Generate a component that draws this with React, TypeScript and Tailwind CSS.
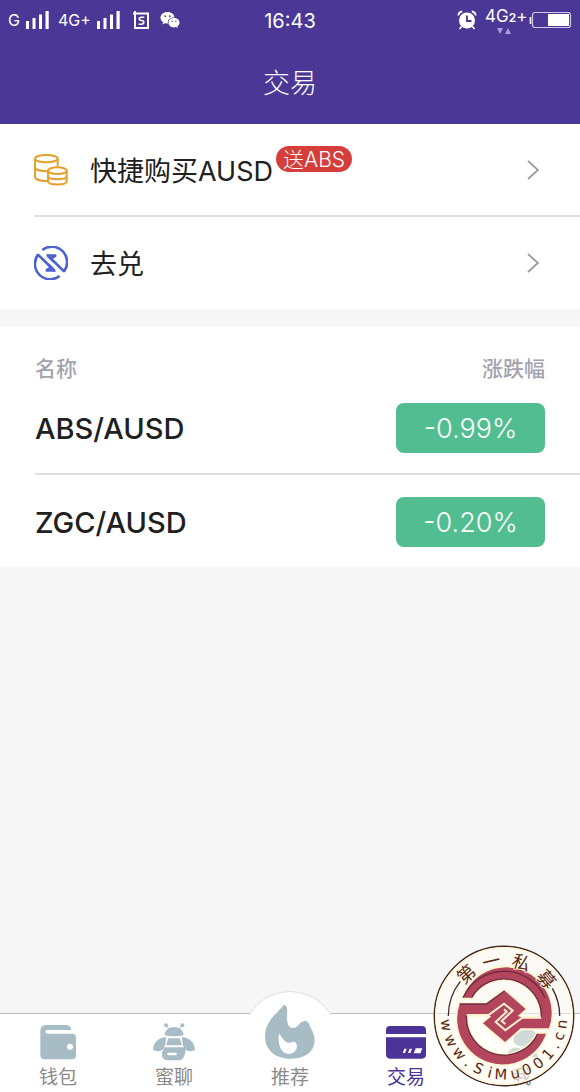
import type { ReactNode } from "react";

function SignalBars() {
  return (
    <svg className="h-[18px] w-6" viewBox="0 0 24 18" fill="currentColor" aria-hidden="true">
      <rect x="0" y="10" width="3" height="8" />
      <rect x="6.5" y="7" width="3" height="11" />
      <rect x="13" y="3.5" width="3" height="14.5" />
      <rect x="19.5" y="0" width="3.2" height="18" />
    </svg>
  );
}

function StatusBar() {
  return (
    <div className="relative flex h-10 items-center justify-between pl-2 pr-2 text-white">
      <div className="flex items-center">
        <span className="w-[18px] text-base">G</span>
        <SignalBars />
        <span className="ml-2 w-9 text-base">4G+</span>
        <span className="ml-[3px] flex">
          <SignalBars />
        </span>
        <svg className="ml-3 h-[18px] w-[17px]" viewBox="0 0 17 18" fill="none" stroke="currentColor" strokeWidth="2" aria-hidden="true">
          <path d="M0 2.500H15V17H2V0" />
          <path d="M11.300 6.200H8.500C5.500 6.200 5.500 9.500 8.500 9.500S11.500 13.200 8.500 13.200H5.700" strokeWidth="1.600" />
        </svg>
        <svg className="ml-2.5 h-[18px] w-5" viewBox="0 0 20 18" aria-hidden="true">
          <path d="M7.500 1C3.500 1 .5 3.500.5 6.700c0 1.900 1 3.400 2.600 4.500l-.7 2.300 2.500-1.300c.8.2 1.700.3 2.600.3 4 0 7-2.600 7-5.800S11.500 1 7.500 1Z" fill="#fff" />
          <ellipse cx="14" cy="11.800" rx="6.300" ry="5.600" fill="#4b3796" />
          <path d="M14 7c-3.200 0-5.500 2.100-5.500 4.700s2.300 4.700 5.500 4.700c.7 0 1.300-.1 1.900-.3l2 1-.5-1.800c1.300-.9 2.100-2.100 2.100-3.600C19.500 9.100 17.200 7 14 7Z" fill="#fff" />
          <g fill="#4b3796">
            <circle cx="5.200" cy="5.200" r=".9" />
            <circle cx="9.800" cy="5.200" r=".9" />
            <circle cx="12.200" cy="10.200" r=".7" />
            <circle cx="15.900" cy="10.200" r=".7" />
          </g>
        </svg>
      </div>
      <time className="absolute left-1/2 -translate-x-1/2 pt-0.5 text-xl">16:43</time>
      <div className="flex items-center">
        <svg className="h-5 w-5" viewBox="0 0 20 20" aria-hidden="true">
          <circle cx="10" cy="10.500" r="8" fill="#fff" />
          <path d="M1.200 5.500A5 5 0 0 1 5.200 1.300M18.800 5.500A5 5 0 0 0 14.800 1.300M4.500 16.500l-2 2.500M15.500 16.500l2 2.500" fill="none" stroke="#fff" strokeWidth="1.700" />
          <path d="M10 5.500V11h4.500" fill="none" stroke="#4b3796" strokeWidth="1.800" />
        </svg>
        <div className="ml-2 flex w-10 flex-col items-start">
          <span className="flex items-baseline text-[17px] leading-5">
            4G<small className="text-xs font-semibold leading-5">2</small>+
          </span>
          <svg className="ml-3 h-[6px] w-[14px]" viewBox="0 0 14 6" fill="#a99bdc" aria-hidden="true">
            <path d="M0 0H6L3 6ZM8 6h6L11 0Z" />
          </svg>
        </div>
        <svg className="ml-1 h-[18px] w-[43px]" viewBox="0 0 43 18" aria-hidden="true">
          <path d="M1.500 6v7" stroke="#fff" strokeWidth="1.600" />
          <rect x="3.500" y="1.500" width="38" height="15" rx="2.500" fill="none" stroke="#cfc6e8" strokeWidth="1.200" />
          <rect x="19" y="3" width="21" height="12" fill="#fff" />
        </svg>
      </div>
    </div>
  );
}

function CoinsIcon() {
  return (
    <svg className="h-[34px] w-[34px]" viewBox="0 0 102 102" fill="none" stroke="#e5a02c" strokeWidth="6" aria-hidden="true">
      <ellipse cx="37" cy="17" rx="34" ry="11" />
      <path d="M3 17V71C3 78 16 84 41 84M71 17V40M3 43C3 50 19 56 43 54" />
      <ellipse cx="70" cy="53" rx="28" ry="10" />
      <path d="M42 53V85C42 98 98 98 98 85V53M42 69C42 82 98 82 98 69" />
    </svg>
  );
}

function ExchangeIcon() {
  return (
    <svg className="h-[34px] w-[34px]" viewBox="0 0 102 102" fill="none" stroke="#4d62cf" strokeWidth="8" aria-hidden="true">
      <path d="M25 12A46 46 0 0 1 90 76L40 27" strokeLinejoin="bevel" />
      <path d="M77 90A46 46 0 0 1 12 26L62 75" strokeLinejoin="bevel" />
      <path d="M36 25H67V32L57 38V50L41 34ZM66 77H35V70L45 64V52L61 68Z" fill="#4d62cf" stroke="none" />
    </svg>
  );
}

function Chevron() {
  return (
    <svg className="h-5 w-3" viewBox="0 0 12 20" fill="none" stroke="#999" strokeWidth="1.700" aria-hidden="true">
      <path d="M1 1L11 10L1 19" />
    </svg>
  );
}

function ActionRow({ icon, label, badge }: { icon: ReactNode; label: string; badge?: string }) {
  return (
    <a href="#" className="flex h-[92px] items-center pr-[41px]">
      {icon}
      <span className="relative ml-[22px] pt-1 text-[27px] leading-9">
        {label}
        {badge && (
          <span className="absolute -top-1 left-full ml-[3px] flex h-[26px] items-center whitespace-nowrap rounded-full bg-[#d53e3b] px-[7px] pt-0.5 text-[21px] font-light text-white">
            {badge}
          </span>
        )}
      </span>
      <span className="ml-auto">
        <Chevron />
      </span>
    </a>
  );
}

const pairs = [
  { name: "ABS/AUSD", change: "-0.99%" },
  { name: "ZGC/AUSD", change: "-0.20%" },
];

function WalletIcon() {
  return (
    <svg className="h-[35px] w-9" viewBox="0 0 108 105" aria-hidden="true">
      <path d="M18 0H78Q92 0 94 15H22Q16 15 16 20T22 26H96Q108 26 108 38V92Q108 103 96 103H14Q1 103 1 90V18Q1 0 18 0Z" fill="#a8bcc6" />
      <circle cx="90" cy="65" r="9" fill="#fff" />
    </svg>
  );
}

function BeeIcon() {
  return (
    <svg className="h-[38px] w-[42px]" viewBox="0 0 126 114" fill="#a8bcc6" aria-hidden="true">
      <circle cx="39" cy="7" r="6" />
      <circle cx="88" cy="7" r="6" />
      <path d="M42 12L48 18M84 12L78 18" stroke="#a8bcc6" strokeWidth="3" />
      <path d="M34 37C38 4 88 4 92 37Q63 43 34 37Z" />
      <path d="M46 46H80L87 67H39Z" />
      <path d="M40 43C20 41 0 59 0 80C16 89 32 84 36 68ZM86 43C106 41 126 59 126 80C110 89 94 84 90 68Z" />
      <path d="M35 73H91Q101 78 96 92Q90 112 78 112H43Q25 112 27 88Z" />
      <rect x="43" y="89" width="28" height="8" rx="3" fill="#fff" />
    </svg>
  );
}

function FlameIcon() {
  return (
    <svg className="h-[54px] w-[50px]" viewBox="0 0 150 162" aria-hidden="true">
      <path d="M56 0C68 0 67 14 66 26C64 51 69 69 84 69C101 69 101 50 119 48C132 47 132 59 139 72C150 92 153 112 142 132C129 154 103 161 76 161C30 161 0 133 0 95C0 48 34 28 56 0Z" fill="#a8bcc6" />
      <path d="M42 86C52 95 55 110 70 113C82 115 85 106 92 113C102 124 92 147 71 147C47 145 37 116 42 86Z" fill="#fff" />
    </svg>
  );
}

function CardIcon() {
  return (
    <svg className="h-[33px] w-10" viewBox="0 0 120 99" aria-hidden="true">
      <path d="M12 0H108Q120 0 120 13V24H0V13Q0 0 12 0ZM0 34H120V85Q120 98 108 98H12Q0 98 0 85Z" fill="#4b3398" />
      <path d="M55 68H62L57 81H50ZM71 68H78L73 81H66ZM89 67H109L103 82H83Z" fill="#fff" />
    </svg>
  );
}

function ProfileIcon() {
  return (
    <svg className="h-9 w-9" viewBox="0 0 36 36" fill="#9fb6c1" aria-hidden="true">
      <ellipse cx="21" cy="14" rx="12" ry="8" transform="rotate(-15 21 14)" />
      <path d="M2 33C4 24 12 21 18 26L22 31C25 24 32 24 34 33Z" />
    </svg>
  );
}

const tabs = [
  { label: "钱包", icon: <WalletIcon /> },
  { label: "蜜聊", icon: <BeeIcon /> },
  { label: "推荐", icon: <FlameIcon /> },
  { label: "交易", icon: <CardIcon />, active: true },
  { label: "我", icon: <ProfileIcon /> },
];

const sealTop: [string, number][] = [["第", -42], ["一", -13], ["私", 18], ["募", 49]];
const sealBottom: [string, number][] = [
  ["w", 81], ["w", 65], ["w", 50], [".", 38], ["S", 26], ["i", 14], ["M", 3],
  ["u", -11], ["0", -23], ["0", -36], ["1", -49], [".", -60], ["c", -70], ["n", -82],
];

function Seal() {
  return (
    <svg className="pointer-events-none absolute bottom-[5px] right-[5px] size-[142px]" viewBox="-213 -213 426 426" role="img" aria-label="第一私募 www.SiMu001.cn">
      <circle r="209" fill="#fffdf2" fillOpacity=".5" stroke="#442a20" strokeWidth="4.500" />
      <circle r="204" fill="none" stroke="#fff8dc" strokeWidth="5" />
      <path d="M-167 0A167 167 0 0 1 -131 -104M167 0A167 167 0 0 0 145 -83" fill="none" stroke="#442a20" strokeWidth="4" />
      <g stroke="#fff6d4" strokeWidth="12" strokeLinejoin="round" fill="#b3455d">
        <path d="M-123 -55A135 135 0 1 1 135 37H50L3 78L-63 22L-18 -16H2L55 5H112A112 112 0 0 0 -97 -55Z" />
        <path d="M-133 -36H-53L2 -76L65 -21L3 34L-45 -3H-112A112 112 0 0 0 101 53H126A135 135 0 0 1 -133 -36Z" />
      </g>
      <g fill="#b3455d">
        <path d="M-123 -55A135 135 0 1 1 135 37H50L3 78L-63 22L-18 -16H2L55 5H112A112 112 0 0 0 -97 -55Z" />
        <path d="M-133 -36H-53L2 -76L65 -21L3 34L-45 -3H-112A112 112 0 0 0 101 53H126A135 135 0 0 1 -133 -36Z" />
      </g>
      <g fill="none" stroke="#6f2c3e" strokeWidth="4">
        <path d="M-123 -55A135 135 0 0 1 123 -55M-133 -36H-53L2 -76M-112 -3A112 112 0 0 0 101 53M-97 -55A112 112 0 0 1 112 5" />
      </g>
      <path d="M-112 -3H-46L0 -37L26 -16L-7 15L4 24M112 5H55L4 43L-25 18L8 -13L0 -20" fill="none" stroke="#fff2cf" strokeWidth="6" />
      <g fill="#57291f" stroke="#fff9df" strokeWidth="5" paintOrder="stroke" textAnchor="middle">
        {sealTop.map(([glyph, angle]) => (
          <text key={glyph} y="-149" transform={`rotate(${angle})`} className="font-['Noto_Sans_CJK_SC',sans-serif] text-[54px]">
            {glyph}
          </text>
        ))}
        {sealBottom.map(([glyph, angle], i) => (
          <text key={i} y="190" transform={`rotate(${angle})`} className="font-['DejaVu_Sans',sans-serif] text-[44px]">
            {glyph}
          </text>
        ))}
      </g>
    </svg>
  );
}

function TabBar() {
  return (
    <nav className="relative mt-auto border-t border-[#bdbdbd] bg-white">
      <div className="absolute -top-[23px] left-1/2 h-6 w-24 -translate-x-1/2 overflow-hidden" aria-hidden="true">
        <div className="size-24 rounded-full border border-[#dedede] bg-white" />
      </div>
      <div className="relative grid h-[78px] grid-cols-5">
        {tabs.map((tab) => (
          <a
            key={tab.label}
            href="#"
            aria-current={tab.active ? "page" : undefined}
            className={`flex flex-col items-center justify-end text-[19px] leading-7 ${tab.active ? "text-[#4b3398]" : "text-[#8a8a8a]"}`}
          >
            <span className="flex h-9 items-center justify-center">
              <span className={tab.label === "推荐" ? "-mt-5" : ""}>{tab.icon}</span>
            </span>
            <span className="mt-1">{tab.label}</span>
          </a>
        ))}
      </div>
      <Seal />
    </nav>
  );
}

export default function App() {
  return (
    <div className="flex min-h-screen flex-col bg-[#f6f6f6] font-['Inter','Noto_Sans_CJK_SC',sans-serif] text-[#202020]">
      <header className="h-[124px] bg-[#4b3796] text-white">
        <StatusBar />
        <h1 className="flex h-[84px] items-center justify-center pt-1 text-[27px] font-light">交易</h1>
      </header>
      <main>
        <section className="divide-y-2 divide-[#dedede] bg-white pl-[34px] pt-px">
          <ActionRow icon={<CoinsIcon />} label="快捷购买AUSD" badge="送ABS" />
          <ActionRow icon={<ExchangeIcon />} label="去兑" />
        </section>
        <section className="mt-[18px] bg-white pl-[35px]">
          <table className="w-full border-collapse text-left">
            <thead>
              <tr className="h-[54px] text-[21px] text-[#a3a3ad]">
                <th className="pt-[29px] font-medium leading-6">名称</th>
                <th className="pr-[35px] pt-[29px] text-right font-medium leading-6">涨跌幅</th>
              </tr>
            </thead>
            <tbody className="divide-y-2 divide-[#dedede]">
              {pairs.map((pair) => (
                <tr key={pair.name} className="h-[93px]">
                  <td className="pt-1 text-[29px] font-medium">{pair.name}</td>
                  <td className="pr-[35px] pt-0.5">
                    <span className="ml-auto flex h-[50px] w-[149px] items-center justify-center rounded-lg bg-[#52bd90] pt-0.5 text-[27px] font-light text-white">
                      {pair.change}
                    </span>
                  </td>
                </tr>
              ))}
            </tbody>
          </table>
        </section>
      </main>
      <TabBar />
    </div>
  );
}
